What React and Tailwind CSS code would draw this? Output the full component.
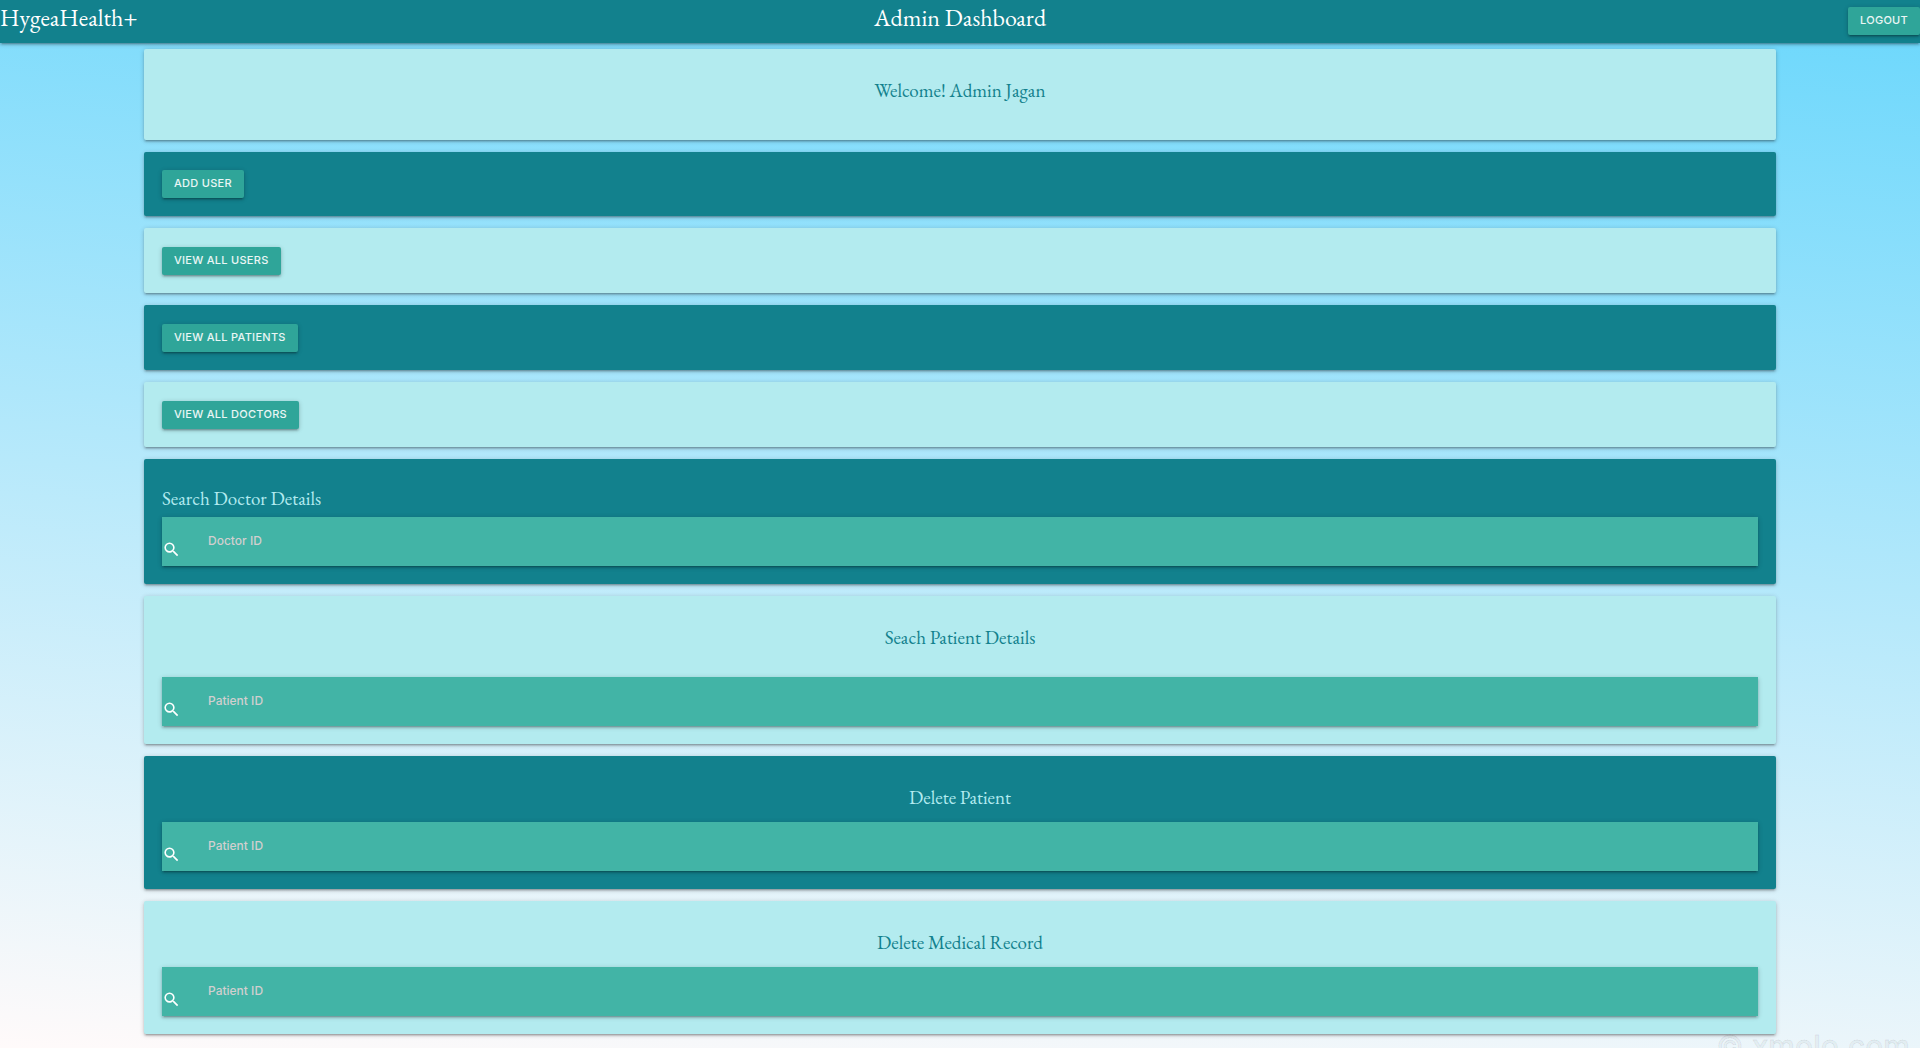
import { useId } from "react";
import { MdSearch } from "react-icons/md";

const SERIF = "font-['EB_Garamond','Liberation_Serif',serif]";
const SHADOW =
  "shadow-[0_2px_2px_0_rgba(0,0,0,0.14),0_3px_1px_-2px_rgba(0,0,0,0.12),0_1px_5px_0_rgba(0,0,0,0.2)]";

const TONES = {
  dark: "bg-[#12818d] text-[#b2ebf0]",
  light: "bg-[#b3ebef] text-[#12818d]",
};

function ActionButton({ children }) {
  return (
    <button
      type="button"
      className={`h-7 rounded-xs bg-[#2fa599] px-3 pb-px text-[11px] font-medium tracking-wide whitespace-nowrap text-white/90 uppercase ${SHADOW}`}
    >
      {children}
    </button>
  );
}

function Card({ tone, className = "", children }) {
  return (
    <section className={`flex flex-col rounded-xs px-[18px] pb-[18px] ${TONES[tone]} ${SHADOW} ${className}`}>
      {children}
    </section>
  );
}

function ActionCard({ tone, label, className = "pt-[19px]" }) {
  return (
    <Card tone={tone} className={`items-start ${className}`}>
      <ActionButton>{label}</ActionButton>
    </Card>
  );
}

function CardTitle({ className = "text-center", children }) {
  return <h2 className={`text-[19px] leading-6 ${SERIF} ${className}`}>{children}</h2>;
}

function SearchField({ label }) {
  const id = useId();
  return (
    <div className={`flex h-[49px] items-center bg-[#42b4a6] ${SHADOW}`}>
      <label htmlFor={id} className="flex w-[46px] shrink-0 self-end pb-[7px] text-white">
        <MdSearch size={19} title={label} />
      </label>
      <input
        id={id}
        type="text"
        placeholder={label}
        className="h-full min-w-0 flex-1 bg-transparent pb-0.5 text-xs font-medium text-white outline-none placeholder:text-[#d1cfcf]"
      />
    </div>
  );
}

export default function App() {
  return (
    <div className="relative flex min-h-screen flex-col overflow-hidden bg-[linear-gradient(185deg,#6ad7fc,#fffafa)] font-['Inter',sans-serif]">
      <nav className={`grid h-[43px] grid-cols-3 items-start bg-[#12818d] text-white ${SHADOW}`}>
        <a href="#home" className={`justify-self-start text-2xl leading-9 ${SERIF}`}>
          HygeaHealth+
        </a>
        <h1 className={`justify-self-center text-2xl leading-9 ${SERIF}`}>Admin Dashboard</h1>
        <div className="flex justify-self-end pt-[7px]">
          <ActionButton>Logout</ActionButton>
        </div>
      </nav>

      <main className="mx-auto mt-1.5 mb-3.5 flex w-[85%] flex-col gap-3">
        <Card tone="light" className="h-[91px] pt-[30px]">
          <CardTitle>Welcome! Admin Jagan</CardTitle>
        </Card>
        <ActionCard tone="dark" label="Add User" className="pt-[18px]" />
        <ActionCard tone="light" label="View All Users" />
        <ActionCard tone="dark" label="View All Patients" />
        <ActionCard tone="light" label="View All Doctors" />
        <Card tone="dark" className="gap-1.5 pt-7">
          <CardTitle className="text-left">Search Doctor Details</CardTitle>
          <SearchField label="Doctor ID" />
        </Card>
        <Card tone="light" className="gap-[27px] pt-[30px]">
          <CardTitle>Seach Patient Details</CardTitle>
          <SearchField label="Patient ID" />
        </Card>
        <Card tone="dark" className="gap-3 pt-[30px]">
          <CardTitle>Delete Patient</CardTitle>
          <SearchField label="Patient ID" />
        </Card>
        <Card tone="light" className="gap-3 pt-[30px]">
          <CardTitle>Delete Medical Record</CardTitle>
          <SearchField label="Patient ID" />
        </Card>
      </main>

      <p className="pointer-events-none absolute right-2.5 -bottom-4.5 text-[30px] leading-10 font-medium text-black/5 [-webkit-text-stroke:1px_rgba(0,0,0,0.07)]">
        © xmolo.com
      </p>
    </div>
  );
}
